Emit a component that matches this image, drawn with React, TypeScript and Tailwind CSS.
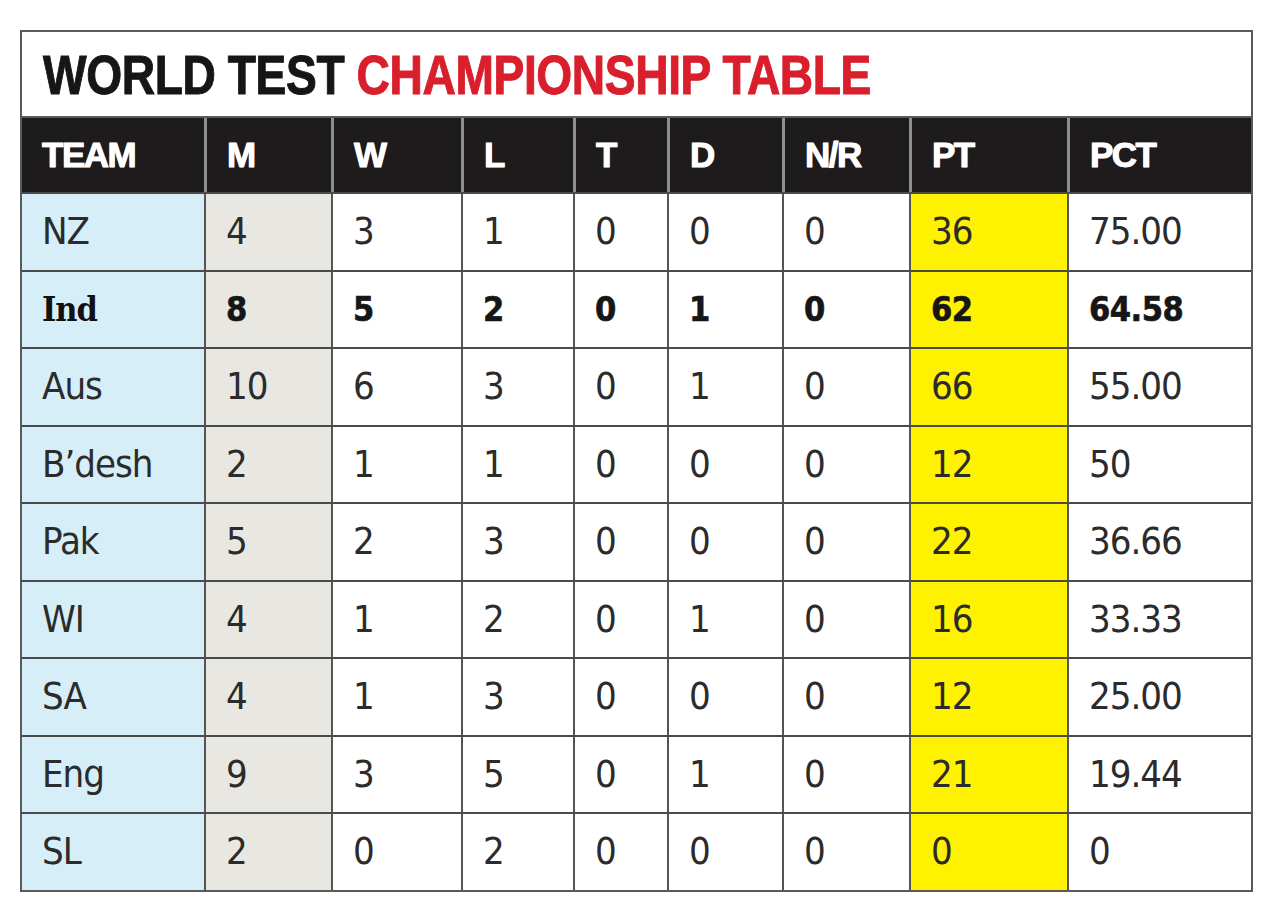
import React from "react";

type Row = { team: string; v: string[]; bold?: boolean };

const rows: Row[] = [
  { team: "NZ", v: ["4", "3", "1", "0", "0", "0", "36", "75.00"] },
  { team: "Ind", v: ["8", "5", "2", "0", "1", "0", "62", "64.58"], bold: true },
  { team: "Aus", v: ["10", "6", "3", "0", "1", "0", "66", "55.00"] },
  { team: "B’desh", v: ["2", "1", "1", "0", "0", "0", "12", "50"] },
  { team: "Pak", v: ["5", "2", "3", "0", "0", "0", "22", "36.66"] },
  { team: "WI", v: ["4", "1", "2", "0", "1", "0", "16", "33.33"] },
  { team: "SA", v: ["4", "1", "3", "0", "0", "0", "12", "25.00"] },
  { team: "Eng", v: ["9", "3", "5", "0", "1", "0", "21", "19.44"] },
  { team: "SL", v: ["2", "0", "2", "0", "0", "0", "0", "0"] },
];

const headers = ["TEAM", "M", "W", "L", "T", "D", "N/R", "PT", "PCT"];

const cols = "grid grid-cols-[182px_127px_130px_112px_94px_115px_127px_158px_184px]";

function bgFor(i: number) {
  if (i === 0) return "bg-[#d6eef8]";
  if (i === 1) return "bg-[#e9e7e2]";
  if (i === 7) return "bg-[#fff200]";
  return "bg-white";
}

export default function App() {
  return (
    <div className="w-[1280px] h-[913px] bg-white pt-[30px] pl-[20px]">
      <div className="w-[1233px] border-2 border-[#5a5a5a] bg-white">
        <div className="h-[86px] flex items-center pl-[21px] border-b-2 border-[#5a5a5a]">
          <div
            className="origin-left scale-x-[0.84] whitespace-nowrap text-[55px] leading-none font-bold tracking-[-0.5px] text-[#161616] mt-[2px]"
            style={{ fontFamily: '"Liberation Sans", Arial, sans-serif', WebkitTextStroke: "1px currentColor" }}
          >
            WORLD TEST <span className="text-[#d91e2c]">CHAMPIONSHIP TABLE</span>
          </div>
        </div>
        <div className={`${cols} h-[74px] bg-[#1d1b1c]`}>
          {headers.map((h, i) => (
            <div
              key={h}
              className={`flex items-center pl-[20px] text-white text-[35px] font-bold tracking-[-1.5px] ${
                i > 0 ? "border-l-[3px] border-[#8f8f8f]" : ""
              }`}
              style={{
                fontFamily: '"Liberation Sans", Arial, sans-serif',
                WebkitTextStroke: "0.8px #fff",
                textShadow: "0 0 1px #fff",
              }}
            >
              {h}
            </div>
          ))}
        </div>
        {rows.map((r) => {
          const cells = [r.team, ...r.v];
          return (
            <div key={r.team} className={`${cols} h-[77.5px] border-t-2 border-[#4a4a4a]`}>
              {cells.map((c, i) => {
                const boldTeam = r.bold && i === 0;
                const boldNum = r.bold && i > 0;
                return (
                  <div
                    key={i}
                    className={`flex items-center pl-[20px] ${bgFor(i)} ${
                      i > 0 ? "border-l-2 border-[#555]" : ""
                    } ${
                      boldTeam
                        ? "text-[34px] font-bold text-[#111] tracking-[-1px]"
                        : boldNum
                        ? "text-[34px] font-bold text-[#161616] tracking-[-0.5px]"
                        : "text-[38px] text-[#2b2b2b] tracking-[-1px]"
                    }`}
                    style={{
                      fontFamily: boldTeam
                        ? '"DejaVu Serif Condensed", "DejaVu Serif", serif'
                        : '"DejaVu Sans Condensed", "DejaVu Sans", sans-serif',
                      WebkitTextStroke: boldNum ? "0.6px #161616" : undefined,
                    }}
                  >
                    {c}
                  </div>
                );
              })}
            </div>
          );
        })}
      </div>
    </div>
  );
}
